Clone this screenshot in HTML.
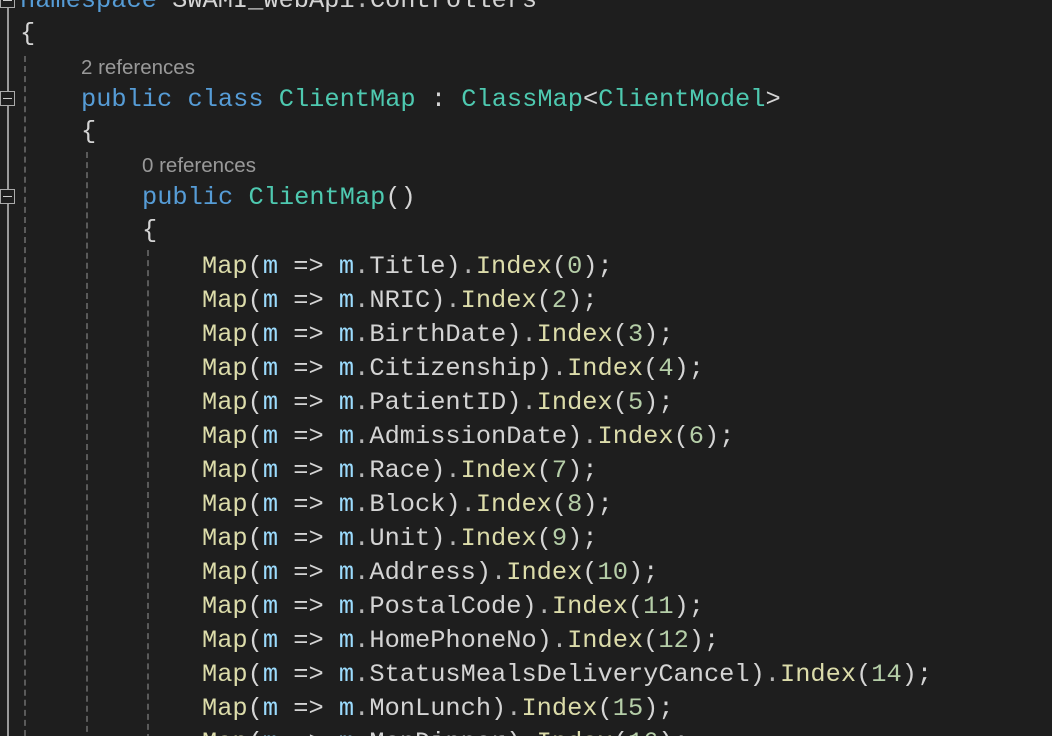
<!DOCTYPE html>
<html><head><meta charset="utf-8"><style>
html,body{margin:0;padding:0;background:#1e1e1e;width:1052px;height:736px;overflow:hidden;position:relative}
.l{position:absolute;white-space:pre;font-family:"Liberation Mono",monospace;font-size:25.35px;line-height:34px;height:34px;color:#d4d4d4}
.c{position:absolute;font-family:"Liberation Sans",sans-serif;font-size:20.5px;line-height:24px;color:#999}
.k{color:#569cd6}.t{color:#4ec9b0}.f{color:#dcdcaa}.v{color:#9cdcfe}.n{color:#b5cea8}.p{color:#b4b4b4}
.g{position:absolute;width:0;border-left:2px dashed #5a5a5a}
.box{position:absolute;left:0;width:13px;height:13px;border:1px solid #aaa;background:#1e1e1e}
.box:after{content:"";position:absolute;left:2px;top:6px;width:9px;height:1px;background:#ccc}
</style></head><body>
<div style="position:absolute;left:7px;top:0;width:2px;height:736px;background:#9a9a9a"></div>
<div class="box" style="top:-7px"></div>
<div class="box" style="top:91px"></div>
<div class="box" style="top:189px"></div>
<div class="g" style="left:24px;top:56px;height:690px"></div>
<div class="g" style="left:86px;top:152px;height:590px"></div>
<div class="g" style="left:147px;top:250px;height:490px"></div>
<div class="l" style="left:20px;top:-16px"><span class="k">namespace</span> SWAMI_WebApi<span class="p">.</span>Controllers</div>
<div class="l" style="left:20px;top:17px">{</div>
<div class="c" style="left:81px;top:56px">2 references</div>
<div class="l" style="left:81px;top:83px"><span class="k">public</span> <span class="k">class</span> <span class="t">ClientMap</span> : <span class="t">ClassMap</span>&lt;<span class="t">ClientModel</span>&gt;</div>
<div class="l" style="left:81px;top:115px">{</div>
<div class="c" style="left:142px;top:154px">0 references</div>
<div class="l" style="left:142px;top:181px"><span class="k">public</span> <span class="t">ClientMap</span>()</div>
<div class="l" style="left:142px;top:214px">{</div>
<div class="l" style="left:202px;top:250px"><span class="f">Map</span>(<span class="v">m</span> =&gt; <span class="v">m</span><span class="p">.</span>Title)<span class="p">.</span><span class="f">Index</span>(<span class="n">0</span>);</div>
<div class="l" style="left:202px;top:284px"><span class="f">Map</span>(<span class="v">m</span> =&gt; <span class="v">m</span><span class="p">.</span>NRIC)<span class="p">.</span><span class="f">Index</span>(<span class="n">2</span>);</div>
<div class="l" style="left:202px;top:318px"><span class="f">Map</span>(<span class="v">m</span> =&gt; <span class="v">m</span><span class="p">.</span>BirthDate)<span class="p">.</span><span class="f">Index</span>(<span class="n">3</span>);</div>
<div class="l" style="left:202px;top:352px"><span class="f">Map</span>(<span class="v">m</span> =&gt; <span class="v">m</span><span class="p">.</span>Citizenship)<span class="p">.</span><span class="f">Index</span>(<span class="n">4</span>);</div>
<div class="l" style="left:202px;top:386px"><span class="f">Map</span>(<span class="v">m</span> =&gt; <span class="v">m</span><span class="p">.</span>PatientID)<span class="p">.</span><span class="f">Index</span>(<span class="n">5</span>);</div>
<div class="l" style="left:202px;top:420px"><span class="f">Map</span>(<span class="v">m</span> =&gt; <span class="v">m</span><span class="p">.</span>AdmissionDate)<span class="p">.</span><span class="f">Index</span>(<span class="n">6</span>);</div>
<div class="l" style="left:202px;top:454px"><span class="f">Map</span>(<span class="v">m</span> =&gt; <span class="v">m</span><span class="p">.</span>Race)<span class="p">.</span><span class="f">Index</span>(<span class="n">7</span>);</div>
<div class="l" style="left:202px;top:488px"><span class="f">Map</span>(<span class="v">m</span> =&gt; <span class="v">m</span><span class="p">.</span>Block)<span class="p">.</span><span class="f">Index</span>(<span class="n">8</span>);</div>
<div class="l" style="left:202px;top:522px"><span class="f">Map</span>(<span class="v">m</span> =&gt; <span class="v">m</span><span class="p">.</span>Unit)<span class="p">.</span><span class="f">Index</span>(<span class="n">9</span>);</div>
<div class="l" style="left:202px;top:556px"><span class="f">Map</span>(<span class="v">m</span> =&gt; <span class="v">m</span><span class="p">.</span>Address)<span class="p">.</span><span class="f">Index</span>(<span class="n">10</span>);</div>
<div class="l" style="left:202px;top:590px"><span class="f">Map</span>(<span class="v">m</span> =&gt; <span class="v">m</span><span class="p">.</span>PostalCode)<span class="p">.</span><span class="f">Index</span>(<span class="n">11</span>);</div>
<div class="l" style="left:202px;top:624px"><span class="f">Map</span>(<span class="v">m</span> =&gt; <span class="v">m</span><span class="p">.</span>HomePhoneNo)<span class="p">.</span><span class="f">Index</span>(<span class="n">12</span>);</div>
<div class="l" style="left:202px;top:658px"><span class="f">Map</span>(<span class="v">m</span> =&gt; <span class="v">m</span><span class="p">.</span>StatusMealsDeliveryCancel)<span class="p">.</span><span class="f">Index</span>(<span class="n">14</span>);</div>
<div class="l" style="left:202px;top:692px"><span class="f">Map</span>(<span class="v">m</span> =&gt; <span class="v">m</span><span class="p">.</span>MonLunch)<span class="p">.</span><span class="f">Index</span>(<span class="n">15</span>);</div>
<div class="l" style="left:202px;top:726px"><span class="f">Map</span>(<span class="v">m</span> =&gt; <span class="v">m</span><span class="p">.</span>MonDinner)<span class="p">.</span><span class="f">Index</span>(<span class="n">16</span>);</div>
</body></html>
